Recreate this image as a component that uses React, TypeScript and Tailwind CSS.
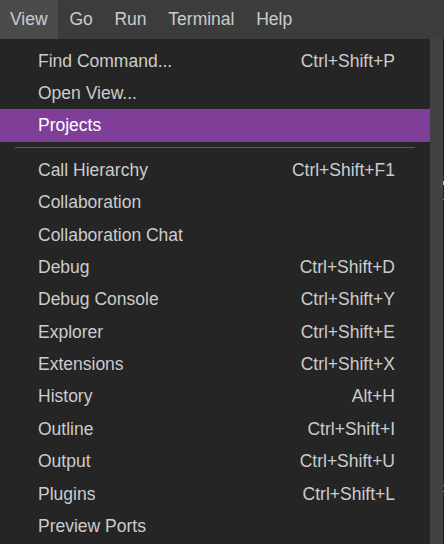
import React from "react";

const menus = ["View", "Go", "Run", "Terminal", "Help"];

type Item = { label: string; keys?: string; active?: boolean } | "sep";

const items: Item[] = [
  { label: "Find Command...", keys: "Ctrl+Shift+P" },
  { label: "Open View..." },
  { label: "Projects", active: true },
  "sep",
  { label: "Call Hierarchy", keys: "Ctrl+Shift+F1" },
  { label: "Collaboration" },
  { label: "Collaboration Chat" },
  { label: "Debug", keys: "Ctrl+Shift+D" },
  { label: "Debug Console", keys: "Ctrl+Shift+Y" },
  { label: "Explorer", keys: "Ctrl+Shift+E" },
  { label: "Extensions", keys: "Ctrl+Shift+X" },
  { label: "History", keys: "Alt+H" },
  { label: "Outline", keys: "Ctrl+Shift+I" },
  { label: "Output", keys: "Ctrl+Shift+U" },
  { label: "Plugins", keys: "Ctrl+Shift+L" },
  { label: "Preview Ports" },
];

export default function App() {
  return (
    <div
      className="w-[444px] h-[544px] overflow-hidden bg-[#252526] text-[17.5px] text-[#cccccc] flex flex-col"
      style={{ fontFamily: '"Liberation Sans", Arial, sans-serif' }}
    >
      <div className="h-[39px] shrink-0 bg-[#3c3c3c] flex items-stretch gap-[1.75px]">
        {menus.map((m, i) => (
          <div
            key={m}
            className={`flex items-center pb-px px-[10px] ${i === 0 ? "bg-[#4b4b4b]" : ""}`}
          >
            {m}
          </div>
        ))}
      </div>

      <div className="flex flex-1 min-h-0">
        <div className="w-[430px] pt-[5.5px]">
          {items.map((it, i) =>
            it === "sep" ? (
              <div key={i} className="h-[12px] flex items-center px-[15px]">
                <div className="h-px w-full bg-[#5c5c5c]" />
              </div>
            ) : (
              <div
                key={i}
                className={`h-[32.4px] flex items-center justify-between pl-[38px] pr-[35px] ${
                  it.active ? "bg-[#7f3f98] text-white" : ""
                }`}
              >
                <span>{it.label}</span>
                {it.keys && <span>{it.keys}</span>}
              </div>
            )
          )}
        </div>
        <div className="w-[13px] bg-[#424242]" />
        <div className="w-px bg-[#1e1e1e] relative">
          <div className="absolute left-0 top-[142px] h-[4px] w-px bg-[#bdbdbd]" />
          <div className="absolute left-0 top-[160px] h-px w-px bg-[#b07a9a]" />
          <div className="absolute left-0 top-[446px] h-px w-px bg-[#b07a9a]" />
          <div className="absolute left-0 top-[452px] h-px w-px bg-[#b07a9a]" />
        </div>
      </div>
    </div>
  );
}
